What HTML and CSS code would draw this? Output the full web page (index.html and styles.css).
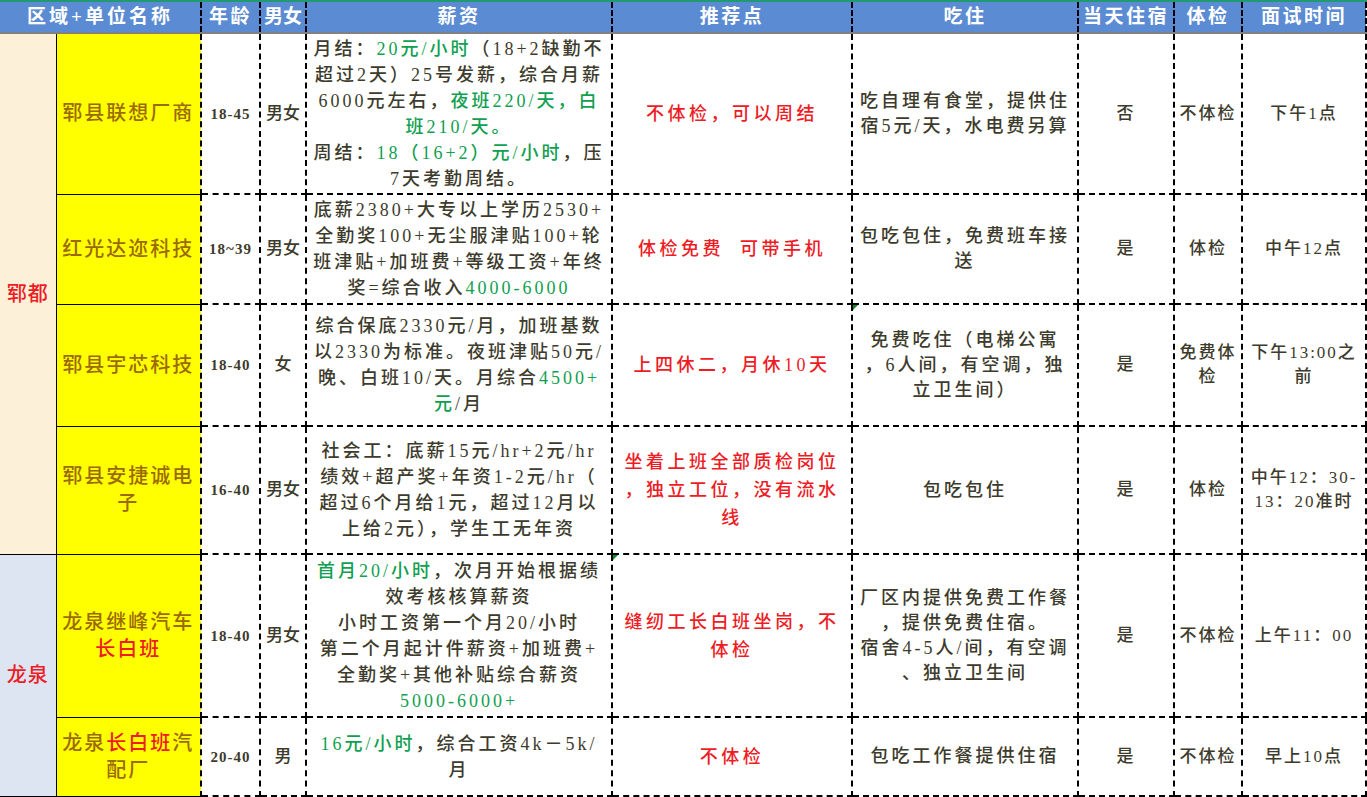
FILE: index.html
```html
<!DOCTYPE html>
<html lang="zh-CN">
<head>
<meta charset="utf-8">
<title>招聘信息表</title>
<link rel="stylesheet" href="styles.css">
</head>
<body>
<table class="sheet">
  <colgroup>
    <col class="c-region"><col class="c-name"><col class="c-age"><col class="c-sex"><col class="c-pay"><col class="c-rec"><col class="c-food"><col class="c-stay"><col class="c-check"><col class="c-time">
  </colgroup>
  <thead>
    <tr class="head">
      <th colspan="2" class="h-first">区域+单位名称</th>
      <th>年龄</th>
      <th class="h-sex">男女</th>
      <th>薪资</th>
      <th>推荐点</th>
      <th>吃住</th>
      <th>当天住宿</th>
      <th>体检</th>
      <th>面试时间</th>
    </tr>
  </thead>
  <tbody>
    <tr class="r1">
      <td rowspan="4" class="region region-a">郓都</td>
      <td class="name">郓县联想厂商</td>
      <td class="age">18-45</td>
      <td class="sex">男女</td>
      <td class="pay">月结：<span class="g">20元/小时</span>（18+2缺勤不<br>超过2天）25号发薪，综合月薪<br>6000元左右，<span class="g">夜班220/天，白<br>班210/天。</span><br>周结：<span class="g">18（16+2）元/小时</span>，压<br>7天考勤周结。</td>
      <td class="rec">不体检，可以周结</td>
      <td class="food">吃自理有食堂，提供住<br>宿5元/天，水电费另算</td>
      <td class="small">否</td>
      <td class="small">不体检</td>
      <td class="small">下午1点</td>
    </tr>
    <tr class="r2">
      <td class="name">红光达迩科技</td>
      <td class="age">18~39</td>
      <td class="sex">男女</td>
      <td class="pay">底薪2380+大专以上学历2530+<br>全勤奖100+无尘服津贴100+轮<br>班津贴+加班费+等级工资+年终<br>奖=综合收入<span class="g">4000-6000</span></td>
      <td class="rec">体检免费&nbsp;&nbsp;可带手机</td>
      <td class="food">包吃包住，免费班车接<br>送</td>
      <td class="small">是</td>
      <td class="small">体检</td>
      <td class="small">中午12点</td>
    </tr>
    <tr class="r3">
      <td class="name">郓县宇芯科技</td>
      <td class="age">18-40</td>
      <td class="sex">女</td>
      <td class="pay">综合保底2330元/月，加班基数<br>以2330为标准。夜班津贴50元/<br>晚、白班10/天。月综合<span class="g">4500+<br>元</span>/月</td>
      <td class="rec">上四休二，月休10天</td>
      <td class="food flag">免费吃住（电梯公寓<br>，6人间，有空调，独<br>立卫生间）</td>
      <td class="small">是</td>
      <td class="small">免费体<br>检</td>
      <td class="small">下午13:00之<br>前</td>
    </tr>
    <tr class="r4">
      <td class="name">郓县安捷诚电<br>子</td>
      <td class="age">16-40</td>
      <td class="sex">男女</td>
      <td class="pay">社会工：底薪15元/hr+2元/hr<br>绩效+超产奖+年资1-2元/hr（<br>超过6个月给1元，超过12月以<br>上给2元），学生工无年资</td>
      <td class="rec">坐着上班全部质检岗位<br>，独立工位，没有流水<br>线</td>
      <td class="food">包吃包住</td>
      <td class="small">是</td>
      <td class="small">体检</td>
      <td class="small">中午12：30-<br>13：20准时</td>
    </tr>
    <tr class="r5">
      <td rowspan="2" class="region region-b">龙泉</td>
      <td class="name">龙泉继峰汽车<br><span class="r">长白班</span></td>
      <td class="age">18-40</td>
      <td class="sex">男女</td>
      <td class="pay"><span class="g">首月20/小时</span>，次月开始根据绩<br>效考核核算薪资<br>小时工资第一个月20/小时<br>第二个月起计件薪资+加班费+<br>全勤奖+其他补贴综合薪资<br><span class="g">5000-6000+</span></td>
      <td class="rec flag">缝纫工长白班坐岗，不<br>体检</td>
      <td class="food">厂区内提供免费工作餐<br>，提供免费住宿。<br>宿舍4-5人/间，有空调<br>、独立卫生间</td>
      <td class="small">是</td>
      <td class="small">不体检</td>
      <td class="small">上午11：00</td>
    </tr>
    <tr class="r6">
      <td class="name">龙泉<span class="r">长白班</span>汽<br>配厂</td>
      <td class="age">20-40</td>
      <td class="sex">男</td>
      <td class="pay"><span class="g">16元/小时</span>，综合工资4k－5k/<br>月</td>
      <td class="rec">不体检</td>
      <td class="food">包吃工作餐提供住宿</td>
      <td class="small">是</td>
      <td class="small">不体检</td>
      <td class="small">早上10点</td>
    </tr>
  </tbody>
</table>
</body>
</html>
```

FILE: styles.css
```css
html, body {
  margin: 0;
  padding: 0;
  background: #ffffff;
  overflow: hidden;
}

body {
  font-family: "Liberation Serif", "Noto Sans CJK SC", serif;
  color: #3d3b2c;
  font-weight: 500;
}

.sheet {
  border-collapse: collapse;
  table-layout: fixed;
  width: 1366px;
}

.c-region { width: 56px; }
.c-name { width: 145px; }
.c-age { width: 59px; }
.c-sex { width: 46px; }
.c-pay { width: 306px; }
.c-rec { width: 240px; }
.c-food { width: 226px; }
.c-stay { width: 96px; }
.c-check { width: 68px; }
.c-time { width: 124px; }

/* header */
.head {
  height: 32px;
}

.head th {
  background: #5b8bd2;
  color: #ffffff;
  font-weight: bold;
  font-size: 19px;
  letter-spacing: 2.5px;
  line-height: 24px;
  padding: 0;
  white-space: nowrap;
  border-top: 2px solid #1f9a73;
  border-bottom: 2px solid #808080;
  border-left: 2px dashed #000;
  border-right: 2px dashed #000;
}

.head th.h-first {
  border-left: none;
  letter-spacing: 3px;
}

.head th.h-sex {
  letter-spacing: 0;
}

/* body cells */
td {
  padding: 0 2px;
  text-align: center;
  vertical-align: middle;
  white-space: nowrap;
  border: 2px dashed #000;
  font-size: 18px;
  line-height: 26px;
  letter-spacing: 3px;
}

.r1 { height: 161px; }
.r2 { height: 110px; }
.r3 { height: 122px; }
.r4 { height: 128px; }
.r5 { height: 163px; }
.r6 { height: 79px; }

.region {
  font-size: 20px;
  letter-spacing: 1px;
  color: #ee1c25;
  border-left: none;
  border-top: 1px solid #000;
  border-bottom: 1px solid #000;
  border-right: 1px solid #000;
  padding: 0;
}

.region-a { background: #fdf0d8; }
.region-b { background: #dce5f1; }

.name {
  background: #ffff00;
  color: #9b6a00;
  font-size: 20px;
  letter-spacing: 2px;
  line-height: 27px;
  border-left: 1px solid #000;
  border-top: 1px solid #000;
  border-bottom: 1px solid #000;
  padding: 0;
}

.age {
  font-size: 15px;
  font-weight: bold;
  letter-spacing: 1px;
  padding: 0;
}

.sex {
  font-size: 17px;
  letter-spacing: 0;
  padding: 0;
}

.pay {
  padding: 0;
}

.rec {
  color: #ee1c25;
  font-size: 18px;
  letter-spacing: 3.5px;
  line-height: 28px;
}

.food {
  line-height: 25px;
}

.small {
  font-size: 17px;
  letter-spacing: 2px;
  line-height: 24px;
  padding: 0;
}

.g { color: #10a050; }
.r { color: #ee1c25; }

.flag {
  position: relative;
}

.flag::before {
  content: "";
  position: absolute;
  left: 0;
  top: 0;
  width: 0;
  height: 0;
  border-top: 5px solid #1a8a2a;
  border-right: 5px solid transparent;
}
```
